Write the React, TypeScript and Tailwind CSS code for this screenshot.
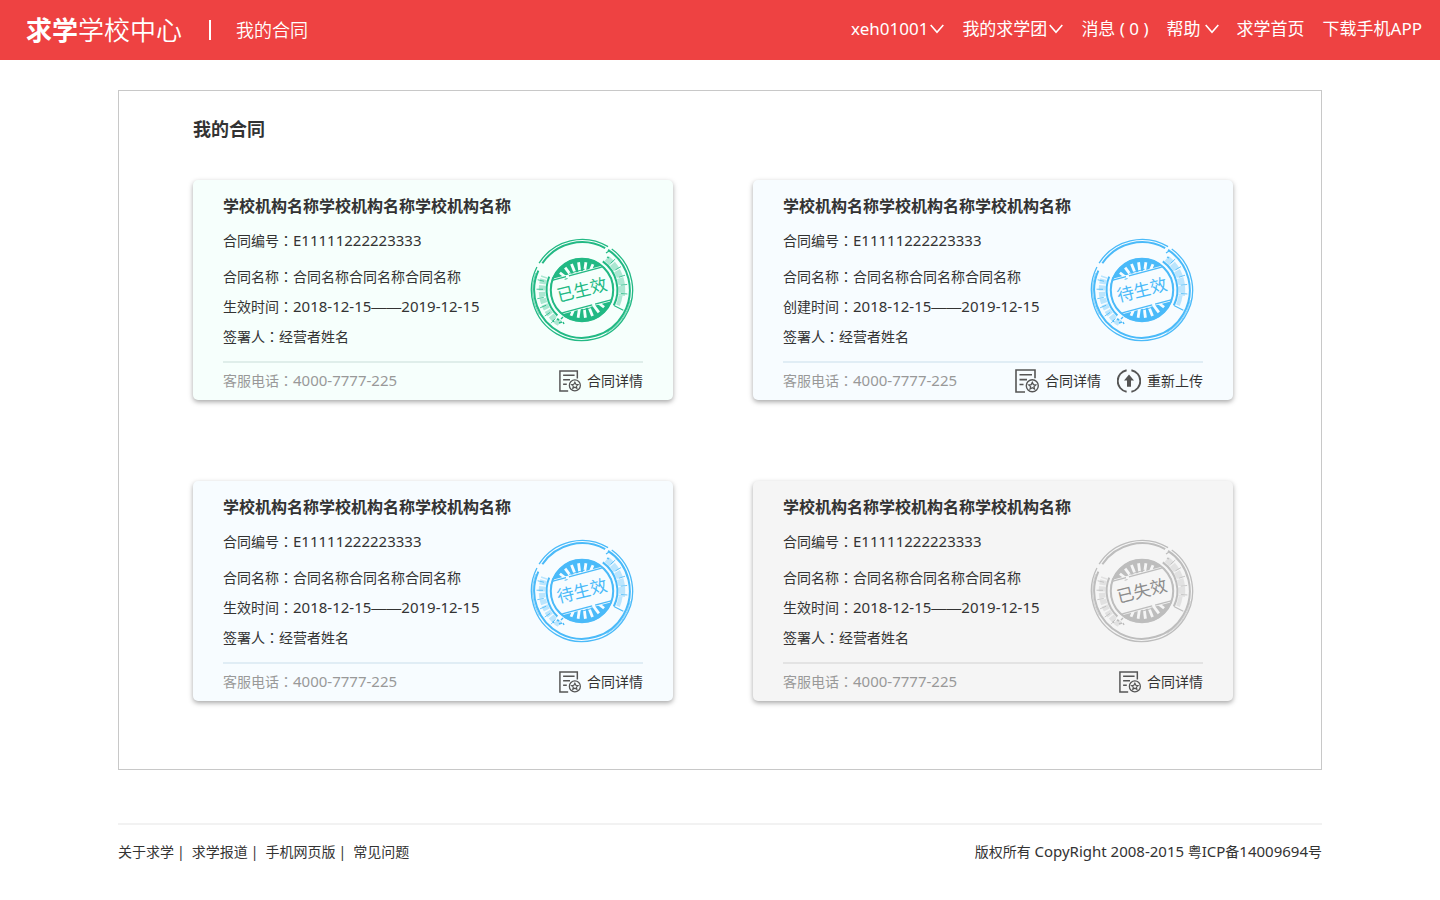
import React from 'react';

type Tone = 'green' | 'blue' | 'gray';

interface Contract {
  tone: Tone;
  stamp: string;
  timeLabel: string;
  canReupload?: boolean;
}

const contracts: Contract[] = [
  { tone: 'green', stamp: '已生效', timeLabel: '生效时间' },
  { tone: 'blue', stamp: '待生效', timeLabel: '创建时间', canReupload: true },
  { tone: 'blue', stamp: '待生效', timeLabel: '生效时间' },
  { tone: 'gray', stamp: '已失效', timeLabel: '生效时间' },
];

const tones: Record<Tone, { card: string; rule: string; ink: string; text: string; paper: string }> = {
  green: { card: 'bg-[#f6fffc]', rule: 'border-[#dfeeea]', ink: '#22b984', text: '#22b984', paper: '#f6fffc' },
  blue: { card: 'bg-[#f7fcff]', rule: 'border-[#e0edf5]', ink: '#4abaf9', text: '#4abaf9', paper: '#f7fcff' },
  gray: { card: 'bg-[#f5f5f5]', rule: 'border-[#e3e3e3]', ink: '#bdbdbd', text: '#8c8c8c', paper: '#f5f5f5' },
};

const polar = (r: number, deg: number) => {
  const a = (deg * Math.PI) / 180;
  return [Number((r * Math.cos(a)).toFixed(2)), Number((r * Math.sin(a)).toFixed(2))];
};

const arc = (r: number, from: number, to: number) => {
  const [x1, y1] = polar(r, from);
  const [x2, y2] = polar(r, to);
  return `M${x1} ${y1}A${r} ${r} 0 ${to - from > 180 ? 1 : 0} 1 ${x2} ${y2}`;
};

const ray = (r1: number, r2: number, deg: number) => {
  const [x1, y1] = polar(r1, deg);
  const [x2, y2] = polar(r2, deg);
  return `M${x1} ${y1}L${x2} ${y2}`;
};

function Stamp({ tone, label }: { tone: Tone; label: string }) {
  const { ink, text, paper } = tones[tone];
  const teeth = [-142, -127, -112, -97, -82, -67, -53, 38, 53, 68, 83, 98, 113, 127];
  return (
    <svg viewBox="-52 -52 104 104" className="mt-5 mr-[9px] size-[104px] shrink-0" fill="none" stroke={ink}>
      <path d={arc(50.6, -148, -59)} strokeWidth="1.3" />
      <path d={arc(50.6, -54, 207)} strokeWidth="1.3" />
      <path d={arc(47.8, -146, -61)} strokeWidth="2" />
      <path d={arc(47.8, -57, 204)} strokeWidth="2" />
      <path d={arc(49.4, 12, 60)} strokeWidth="0.6" />
      <path d={arc(49.4, 150, 200)} strokeWidth="0.6" />

      <circle r="31" fill={ink} strokeWidth="1.6" />
      {teeth.map((d) => (
        <path key={d} d={ray(16, 28, d)} stroke={paper} strokeWidth="2.8" />
      ))}
      <g transform="rotate(-15)">
        <path d="M-25.5 -18.4A31 31 0 0 0 -25.5 18.4H25.5A31 31 0 0 0 25.5 -18.4Z" fill={paper} stroke="none" />
        <path d="M-26.5 -17H-12M-9 -17H25M-25 17H6M9 17H26.5" strokeWidth="1.4" />
        <path d="M-14 -14.8H-11M-8 -19.4H8M-6 19.4H4" strokeWidth="0.9" />
      </g>
      <circle r="31.2" strokeWidth="2" />

      <path d={arc(35.4, -54, 26)} strokeWidth="2" />
      <path d={arc(35.4, 134, 202)} strokeWidth="2" />
      <path d={arc(40, -52, 8)} strokeWidth="6.5" strokeOpacity="0.35" strokeDasharray="7 1" />
      <path d={arc(39, 8, 23)} strokeWidth="4" strokeOpacity="0.35" />
      <path d={arc(40, 124, 200)} strokeWidth="6.5" strokeOpacity="0.35" strokeDasharray="5 1.4" />
      {[-43, -31, -19, -7, 5].map((d) => (
        <path key={d} d={ray(39, 45.5, d)} strokeWidth="1" strokeOpacity="0.8" />
      ))}
      <path d={ray(36, 46, 26)} strokeWidth="1.1" />
      {[133, 145, 157, 169, 181, 193].map((d) => (
        <path key={d} d={ray(39, 45.5, d)} strokeWidth="1" strokeOpacity="0.8" />
      ))}
      <path d="M-21 29l2-2M-23 33l3-1M-19 32l1 2M-25 29l2 1M-29 30l1 2" strokeWidth="1.4" />
      <path d="M24 -37l3 -2M25 -33l2 1" strokeWidth="1.2" />

      <text x="0" y="6" transform="rotate(-14)" textAnchor="middle" fontSize="17" fill={text} stroke="none">
        {label}
      </text>
    </svg>
  );
}

function Chevron() {
  return (
    <svg viewBox="0 0 14 10" className="h-[10px] w-[14px]" fill="none" stroke="currentColor" strokeWidth="1.6">
      <path d="M0.7 1L7 8.2L13.3 1" />
    </svg>
  );
}

function DetailIcon({ className }: { className: string }) {
  return (
    <svg viewBox="0 0 24 24" className={className} fill="none" stroke="#555" strokeWidth="1.6">
      <path d="M20 9.2V1H1V23H10" />
      <path d="M4.5 5.8H17M4.5 10.6H12M4.5 15.5H8.5" />
      <circle cx="17.3" cy="16.8" r="6" strokeWidth="1.4" />
      <path
        d="M17.3 13.4L18.4 15.6L20.8 15.9L19 17.6L19.5 20L17.3 18.8L15.1 20L15.6 17.6L13.8 15.9L16.2 15.6Z"
        strokeWidth="1.3"
      />
    </svg>
  );
}

function UploadIcon() {
  return (
    <svg viewBox="0 0 24 24" className="size-6" fill="none" stroke="#555" strokeWidth="1.9">
      <path d="M9.6 1.2A11 11 0 0 0 9.6 22.8M14.4 1.2A11 11 0 0 1 14.4 22.8" />
      <path d="M12 5.6L17 11.6H14V17.8H10V11.6H7Z" fill="#555" stroke="none" />
    </svg>
  );
}

// The Traditional Chinese face centres the full-width colon in its cell.
function Colon() {
  return (
    <span lang="zh-TW" className="font-['Noto_Sans_CJK_TC',sans-serif] leading-none">
      ：
    </span>
  );
}

function Latin({ children }: { children: React.ReactNode }) {
  return <span className="text-[15px] leading-none">{children}</span>;
}

function Row({ label, children }: { label: string; children: React.ReactNode }) {
  return (
    <div className="flex h-[30px] items-baseline leading-[30px]">
      <dt>
        {label}
        <Colon />
      </dt>
      <dd>{children}</dd>
    </div>
  );
}

function ContractCard({ contract }: { contract: Contract }) {
  const tone = tones[contract.tone];
  return (
    <article className={`rounded-[5px] px-[30px] pt-[14px] shadow-[0_2px_5px_rgba(0,0,0,0.35)] ${tone.card}`}>
      <h2 className="text-base leading-6 font-bold">学校机构名称学校机构名称学校机构名称</h2>
      <div className="flex items-start justify-between">
        <dl className="pt-2 pb-[9px]">
          <div className="mb-1.5">
            <Row label="合同编号">
              <Latin>E11111222223333</Latin>
            </Row>
          </div>
          <Row label="合同名称">合同名称合同名称合同名称</Row>
          <Row label={contract.timeLabel}>
            <Latin>
              2018-12-15<span className="font-['Liberation_Sans',sans-serif]">——</span>2019-12-15
            </Latin>
          </Row>
          <Row label="签署人">经营者姓名</Row>
        </dl>
        <Stamp tone={contract.tone} label={contract.stamp} />
      </div>
      <footer className={`flex h-[39px] items-center justify-between border-t-2 pb-0.5 ${tone.rule}`}>
        <p className="text-[#999]">
          客服电话
          <Colon />
          <Latin>4000-7777-225</Latin>
        </p>
        <div className="flex gap-4">
          <button type="button" className="flex items-center gap-1.5">
            <DetailIcon className={contract.canReupload ? 'size-6' : 'size-[22px]'} />
            合同详情
          </button>
          {contract.canReupload && (
            <button type="button" className="flex items-center gap-1.5">
              <UploadIcon />
              重新上传
            </button>
          )}
        </div>
      </footer>
    </article>
  );
}

export default function App() {
  return (
    <div
      lang="zh-CN"
      className="bg-white font-['Noto_Sans','Noto_Sans_CJK_SC',sans-serif] text-sm text-[#333]"
    >
      <header className="flex h-[60px] items-center justify-between bg-[#ee4242] pr-[18px] pl-[26px] text-white">
        <div className="flex items-center">
          <a href="#home" className="text-[26px] leading-9 font-[350]">
            <span className="font-bold">求学</span>学校中心
          </a>
          <span className="mr-[25px] ml-[27px] h-5 w-0.5 bg-white" />
          <span className="text-lg font-[350]">我的合同</span>
        </div>
        <nav className="flex items-center gap-[18px] pb-0.5 text-[17px] leading-6">
          <button type="button" className="flex items-center gap-0.5">
            xeh01001
            <Chevron />
          </button>
          <button type="button" className="flex items-center gap-0.5">
            我的求学团
            <Chevron />
          </button>
          <a href="#messages">消息 ( 0 )</a>
          <button type="button" className="flex items-center gap-1">
            帮助
            <Chevron />
          </button>
          <a href="#index">求学首页</a>
          <a href="#app">下载手机APP</a>
        </nav>
      </header>

      <main className="mx-auto mt-[30px] w-full max-w-[1204px] border border-[#c8c8c8] pt-6 pr-[88px] pb-[68px] pl-[74px]">
        <h1 className="text-lg leading-7 font-bold">我的合同</h1>
        <div className="mt-[37px] grid grid-cols-2 gap-x-20 gap-y-[81px]">
          {contracts.map((contract, i) => (
            <ContractCard key={i} contract={contract} />
          ))}
        </div>
      </main>

      <footer className="mx-auto mt-[53px] flex w-full max-w-[1204px] justify-between border-t-2 border-[#f2f2f2] pt-[15px] pb-9 leading-6">
        <ul className="flex">
          {['关于求学', '求学报道', '手机网页版', '常见问题'].map((item, i) => (
            <li key={item}>
              {i > 0 && <span className="mr-[7px] ml-[3px]">|</span>}
              <a href="#about">{item}</a>
            </li>
          ))}
        </ul>
        <p>
          版权所有 <Latin>CopyRight 2008-2015</Latin> 粤<Latin>ICP</Latin>备<Latin>14009694</Latin>号
        </p>
      </footer>
    </div>
  );
}
